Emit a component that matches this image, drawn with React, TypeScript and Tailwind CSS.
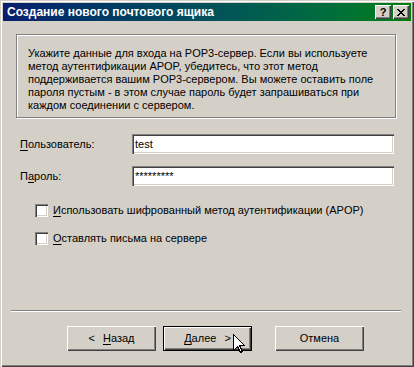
import React from 'react';

const font = { fontFamily: '"Liberation Sans", Arial, sans-serif' };

function Key({ children }: { children: React.ReactNode }) {
  return <span className="underline underline-offset-[2px]">{children}</span>;
}

function Checkbox({ children }: { children: React.ReactNode }) {
  return (
    <div className="flex items-center h-[13px] ml-[32px]">
      <div className="w-[13px] h-[13px] bg-white shadow-[inset_1px_1px_0_#808080,inset_2px_2px_0_#404040,inset_-1px_-1px_0_#ffffff,inset_-2px_-2px_0_#d4d0c8]" />
      <span className="ml-[5px] text-[11px] leading-[13px] text-black">{children}</span>
    </div>
  );
}

function Button({ children, focused }: { children: React.ReactNode; focused?: boolean }) {
  return (
    <div
      className={
        'w-[89px] h-[25px] flex items-center justify-center text-[11px] text-black bg-[#d4d0c8] ' +
        (focused
          ? 'border border-black shadow-[inset_1px_1px_0_#ffffff,inset_-1px_-1px_0_#404040,inset_-2px_-2px_0_#808080]'
          : 'shadow-[inset_1px_1px_0_#ffffff,inset_-1px_-1px_0_#404040,inset_-2px_-2px_0_#808080]')
      }
    >
      {children}
    </div>
  );
}

function TitleButton({ children }: { children: React.ReactNode }) {
  return (
    <div className="w-[16px] h-[14px] bg-[#d4d0c8] flex items-center justify-center shadow-[inset_1px_1px_0_#ffffff,inset_-1px_-1px_0_#404040,inset_-2px_-2px_0_#808080]">
      {children}
    </div>
  );
}

export default function App() {
  return (
    <div className="w-[414px] h-[367px] bg-[#d4d0c8] p-[3px] flex flex-col relative shadow-[inset_1px_1px_0_#d4d0c8,inset_2px_2px_0_#ffffff,inset_-1px_-1px_0_#404040,inset_-2px_-2px_0_#808080]" style={font}>
      {/* title bar */}
      <div className="h-[18px] flex items-center bg-gradient-to-r from-[#0a1e6e] via-[#04505a] to-[#008000] pl-[4px] pr-[2px]">
        <span className="text-white font-bold text-[12px] leading-none flex-1">Создание нового почтового ящика</span>
        <TitleButton>
          <span className="text-[11px] font-bold leading-none text-black mt-[1px]">?</span>
        </TitleButton>
        <div className="ml-[2px]">
          <TitleButton>
            <svg width="8" height="7" viewBox="0 0 8 7" shapeRendering="crispEdges">
              <path d="M0 0h2v1h-2zM6 0h2v1h-2zM1 1h2v1h-2zM5 1h2v1h-2zM2 2h4v1h-4zM3 3h2v1h-2zM2 4h4v1h-4zM1 5h2v1h-2zM5 5h2v1h-2zM0 6h2v1h-2zM6 6h2v1h-2z" fill="#000" />
            </svg>
          </TitleButton>
        </div>
      </div>

      {/* info box */}
      <div className="mt-[13px] ml-[13px] w-[380px] h-[84px] border border-[#808080] shadow-[1px_1px_0_#ffffff,inset_1px_1px_0_#ffffff] pl-[11px] pt-[12px]">
        <p className="text-[11px] leading-[13px] text-black">
          Укажите данные для входа на POP3-сервер. Если вы используете
          <br />
          метод аутентификации APOP, убедитесь, что этот метод
          <br />
          поддерживается вашим POP3-сервером. Вы можете оставить поле
          <br />
          пароля пустым - в этом случае пароль будет запрашиваться при
          <br />
          каждом соединении с сервером.
        </p>
      </div>

      {/* fields */}
      <div className="mt-[16px] flex items-center h-[20px]">
        <span className="ml-[17px] w-[112px] text-[11px] text-black">
          <Key>П</Key>ользователь:
        </span>
        <div className="w-[262px] h-[20px] bg-white flex items-center pl-[3px] text-[11px] text-black shadow-[inset_1px_1px_0_#808080,inset_2px_2px_0_#404040,inset_-1px_-1px_0_#ffffff,inset_-2px_-2px_0_#d4d0c8]">
          test
        </div>
      </div>
      <div className="mt-[12px] flex items-center h-[20px]">
        <span className="ml-[17px] w-[112px] text-[11px] text-black">
          П<Key>а</Key>роль:
        </span>
        <div className="w-[262px] h-[20px] bg-white flex items-center pl-[3px] text-[11px] text-black shadow-[inset_1px_1px_0_#808080,inset_2px_2px_0_#404040,inset_-1px_-1px_0_#ffffff,inset_-2px_-2px_0_#d4d0c8]">
          *********
        </div>
      </div>

      {/* checkboxes */}
      <div className="mt-[18px]">
        <Checkbox>
          <Key>И</Key>спользовать шифрованный метод аутентификации (APOP)
        </Checkbox>
      </div>
      <div className="mt-[15px]">
        <Checkbox>
          <Key>О</Key>ставлять письма на сервере
        </Checkbox>
      </div>

      {/* separator */}
      <div className="mt-[65px] ml-[8px] w-[390px] h-px bg-[#808080] shadow-[0_1px_0_#ffffff]" />

      {/* buttons */}
      <div className="mt-[15px] ml-[64px] flex">
        <Button>
          <span className="mr-[8px]">&lt;</span>
          <span>
            <Key>Н</Key>азад
          </span>
        </Button>
        <div className="ml-[7px] relative">
          <Button focused>
            <span>
              <Key>Д</Key>алее
            </span>
            <span className="ml-[8px]">&gt;</span>
          </Button>
          {/* mouse cursor */}
          <svg className="absolute left-[70px] top-[8px]" width="12" height="20" viewBox="0 0 12 20" shapeRendering="crispEdges">
            <path d="M0.5 0.5 L0.5 16.5 L4.5 12.5 L7.5 18.5 L9.5 17.5 L6.5 11.5 L11.5 11.5 Z" fill="#fff" stroke="#000" strokeWidth="1" />
          </svg>
        </div>
        <div className="ml-[23px]">
          <Button>Отмена</Button>
        </div>
      </div>
    </div>
  );
}
